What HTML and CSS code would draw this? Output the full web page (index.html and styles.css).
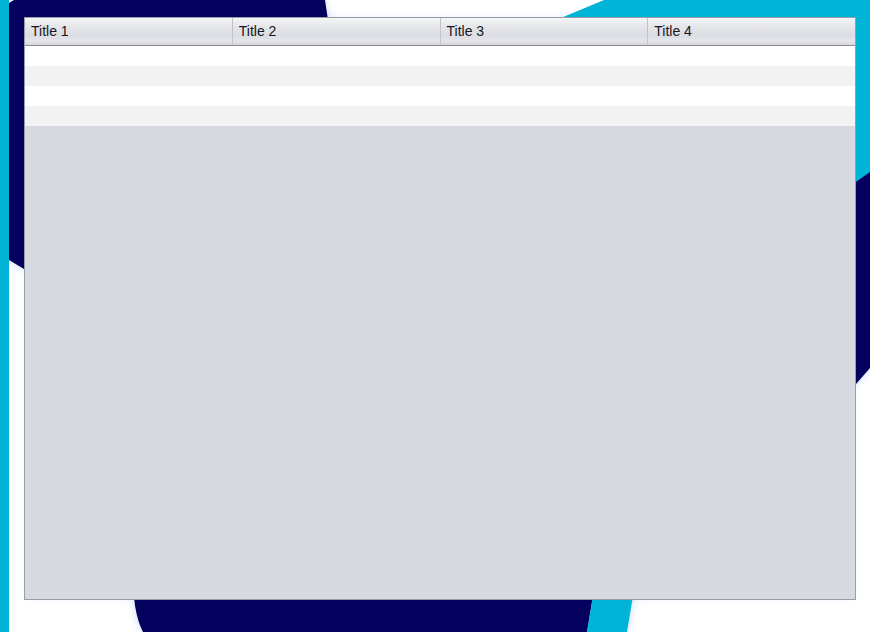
FILE: index.html
```html
<!DOCTYPE html>
<html>
<head>
<meta charset="utf-8">
<link rel="stylesheet" href="styles.css">
</head>
<body>
<div class="page">
  <svg class="bg" width="870" height="632" viewBox="0 0 870 632">
    <defs>
      <filter id="glow" x="-10%" y="-10%" width="120%" height="120%">
        <feGaussianBlur stdDeviation="5"/>
      </filter>
    </defs>
    <g filter="url(#glow)" fill="#c9dcff">
      <path d="M9,3 L14,0 L325,0 L328,20 L870,20 L870,368 L856,384 L850,384 L850,596 L593,596 L587,632 L143,632 C138,622 135,610 134,596 L30,596 L30,269 L24,269 L9,260 Z"/>
      <polygon points="593,596 633,596 627,632 587,632"/>
    </g>
    <path fill="#03005e" d="M9,3 L14,0 L325,0 L328,20 L870,20 L870,368 L856,384 L850,384 L850,596 L593,596 L587,632 L143,632 C138,622 135,610 134,596 L30,596 L30,269 L24,269 L9,260 Z"/>
    <rect x="0" y="0" width="9" height="632" fill="#00b4d8"/>
    <polygon fill="#00b4d8" points="604,0 870,0 870,172 850,186 850,25 544,25"/>
    <polygon fill="#00b4d8" points="593,596 633,596 627,632 587,632"/>
  </svg>
  <div class="table">
    <div class="thead">
      <div class="th">Title 1</div>
      <div class="th">Title 2</div>
      <div class="th">Title 3</div>
      <div class="th">Title 4</div>
    </div>
    <div class="tbody">
      <div class="row"></div>
      <div class="row alt"></div>
      <div class="row"></div>
      <div class="row alt"></div>
    </div>
  </div>
</div>
</body>
</html>
```
FILE: styles.css
```css
html, body {
  margin: 0;
  padding: 0;
  background: #ffffff;
  font-family: "Liberation Sans", Arial, sans-serif;
}

.page {
  position: relative;
  width: 870px;
  height: 632px;
  overflow: hidden;
  box-sizing: border-box;
  padding: 17px 0 0 24px;
}

.bg {
  position: absolute;
  left: 0;
  top: 0;
  z-index: 0;
}

.table {
  position: relative;
  z-index: 1;
  width: 832px;
  height: 583px;
  box-sizing: border-box;
  border: 1px solid #9a9ca4;
  background: #d6d9df;
  display: flex;
  flex-direction: column;
}

.thead {
  display: flex;
  height: 28px;
  box-sizing: border-box;
  border-bottom: 1px solid #8c8e96;
  background: linear-gradient(#f5f5f7 0%, #e6e7ea 30%, #dcdde2 65%, #e4e5ea 85%, #d6d7dd 100%);
}

.th {
  flex: 1 1 0;
  box-sizing: border-box;
  border-right: 1px solid #c3c4ca;
  padding-left: 6px;
  font-size: 14px;
  line-height: 27px;
  color: #15151f;
  white-space: nowrap;
}

.th:last-child {
  border-right: none;
}

.tbody {
  display: flex;
  flex-direction: column;
}

.row {
  height: 20px;
  background: #ffffff;
}

.row.alt {
  background: #f2f2f2;
}
```
